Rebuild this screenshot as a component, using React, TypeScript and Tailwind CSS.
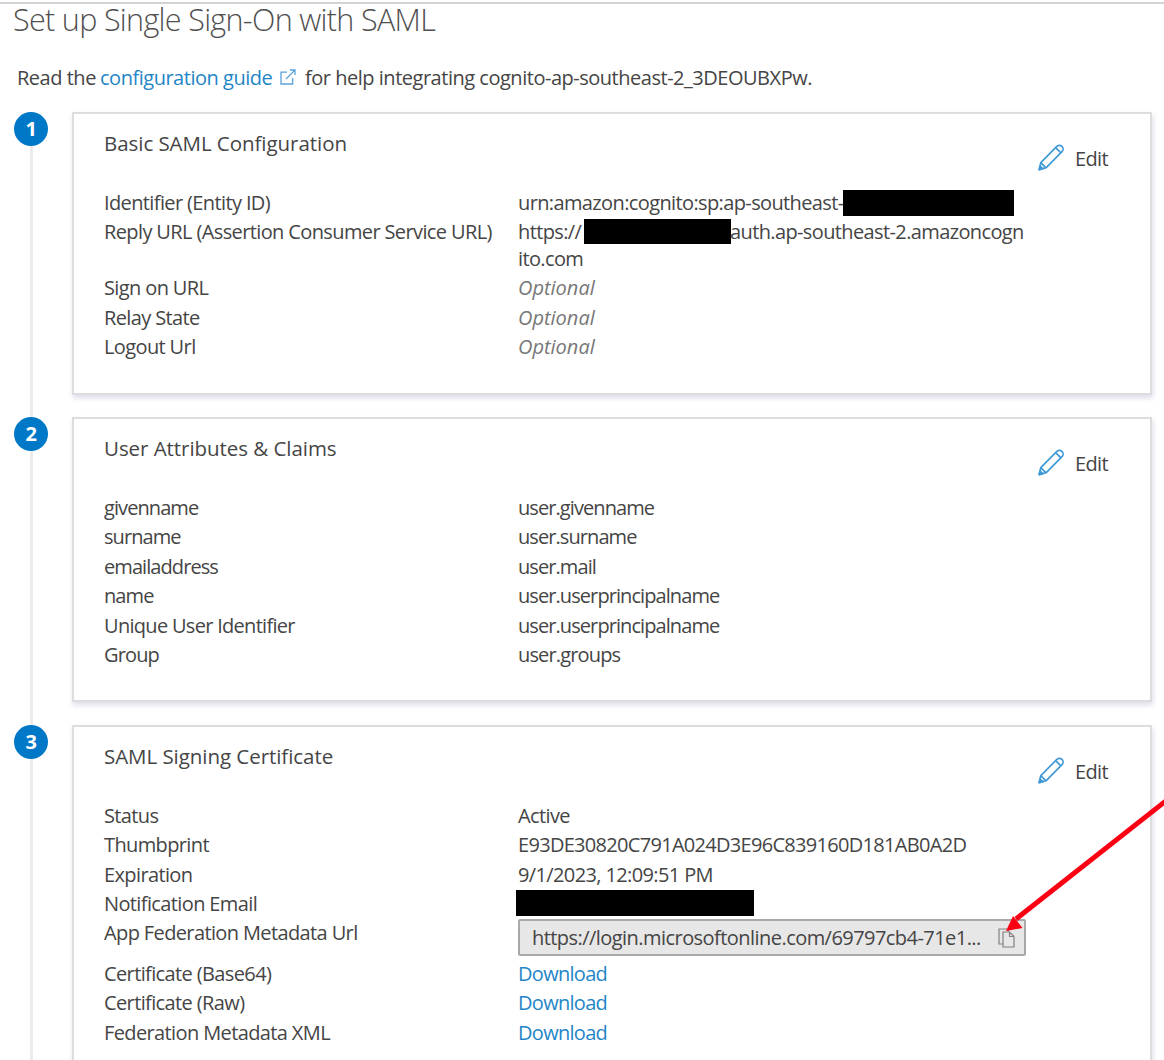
import React from 'react';

interface Row {
  label: string;
  value: React.ReactNode;
  className?: string;
}

interface StepProps {
  number: number;
  title: string;
  rows: Row[];
  last?: boolean;
}

const Optional = () => <span className="italic text-[#777] tracking-[0px]">Optional</span>;

const DownloadLink = () => (
  <a href="#" className="text-[#1f86c7] tracking-[-0.7px]">Download</a>
);

const PencilIcon = () => (
  <svg className="w-[26px] h-[27px]" viewBox="0 0 26 27" fill="none" stroke="#3f9ad6" strokeWidth="1.7" strokeLinejoin="round">
    <path d="M1.2 25.6 L2.8 18.6 L18.6 2.6 C20 1 22.4 0.9 23.9 2.3 C25.5 3.8 25.4 6.2 24 7.7 L8 23.8 Z" />
    <path d="M2.8 18.6 L8 23.8 M17.6 3.7 L22.9 8.8" />
    <path d="M1.2 25.6 L2 22 L4.8 24.7 Z" fill="#3f9ad6" />
  </svg>
);

const ExternalIcon = () => (
  <svg className="w-[16px] h-[16px]" viewBox="0 0 16 16" fill="none" stroke="#5aa3da" strokeWidth="1.3">
    <path d="M7 3.2 H1 V15 H12.6 V9" />
    <path d="M6 10 L14.6 1.4 M10 1 H15 V6" />
  </svg>
);

const CopyIcon = () => (
  <svg className="w-[17px] h-[20px] shrink-0" viewBox="0 0 17 20" fill="none" stroke="#858080" strokeWidth="1.2">
    <path d="M5 16 H1 V1 H9 L11 3.5" />
    <path d="M5 4 H11.5 L16 8.5 V19 H5 Z M11.5 4 V8.5 H16" />
  </svg>
);

const Step: React.FC<StepProps> = ({ number, title, rows, last }) => (
  <section className="flex">
    <div className="w-[72px] shrink-0 pl-[14px]">
      <div className="w-[34px] h-full flex flex-col items-center">
        <div className="w-[34px] h-[34px] shrink-0 rounded-full bg-[#0078c8] text-white font-bold text-[20px] leading-[33px] text-center">
          {number}
        </div>
        <div className="w-[3px] flex-1 bg-[#ebebeb]" />
      </div>
    </div>
    <div className={last ? 'w-[1080px]' : 'w-[1080px] pb-[22.5px]'}>
      <div className="border-2 border-[#dddde0] pl-[30px] pb-[30px] shadow-[1px_3px_5px_rgba(120,120,170,0.25)]">
        <div className="h-[75px] flex justify-between">
          <h2 className="pt-[15px] text-[20.5px] leading-[29px] tracking-[-0.05px]">{title}</h2>
          <button className="flex items-start pt-[30px] pr-[42px] gap-[11px]">
            <PencilIcon />
            <span className="leading-[30px]">Edit</span>
          </button>
        </div>
        {rows.map((row) => (
          <div key={row.label} className={`flex ${row.className ?? 'h-[29.4px]'}`}>
            <div className="w-[414px] shrink-0 leading-[28.6px] whitespace-nowrap">{row.label}</div>
            <div className="leading-[28.6px] whitespace-nowrap">{row.value}</div>
          </div>
        ))}
      </div>
    </div>
  </section>
);

const basicRows: Row[] = [
  {
    label: 'Identifier (Entity ID)',
    value: (
      <div className="flex">
        <span className="w-[325px]">urn:amazon:cognito:sp:ap-southeast-</span>
        <span className="w-[171px] h-[26px] mt-px bg-black" />
      </div>
    ),
  },
  {
    label: 'Reply URL (Assertion Consumer Service URL)',
    className: 'h-[56px]',
    value: (
      <div>
        <div className="flex h-[26.5px]">
          <span className="w-[66px]">https://</span>
          <span className="w-[147px] h-[25px] mt-px bg-black" />
          <span className="-ml-px">auth.ap-southeast-2.amazoncogn</span>
        </div>
        <div>ito.com</div>
      </div>
    ),
  },
  { label: 'Sign on URL', value: <Optional /> },
  { label: 'Relay State', value: <Optional /> },
  { label: 'Logout Url', value: <Optional /> },
];

const claimRowClass = 'h-[29.4px] tracking-[-0.92px]';

const claimRows: Row[] = [
  { label: 'givenname', value: 'user.givenname', className: claimRowClass },
  { label: 'surname', value: 'user.surname', className: claimRowClass },
  { label: 'emailaddress', value: 'user.mail', className: claimRowClass },
  { label: 'name', value: 'user.userprincipalname', className: claimRowClass },
  {
    label: 'Unique User Identifier',
    value: <span className="tracking-[-0.92px]">user.userprincipalname</span>,
    className: 'h-[29.4px] tracking-[-0.7px]',
  },
  { label: 'Group', value: 'user.groups', className: 'h-[29.4px] tracking-[-0.85px]' },
];

const certificateRows: Row[] = [
  { label: 'Status', value: 'Active' },
  { label: 'Thumbprint', value: <span className="tracking-[-0.7px]">E93DE30820C791A024D3E96C839160D181AB0A2D</span> },
  { label: 'Expiration', value: '9/1/2023, 12:09:51 PM' },
  { label: 'Notification Email', value: <div className="w-[238px] h-[26px] -ml-[2px] bg-black" /> },
  {
    label: 'App Federation Metadata Url',
    className: 'h-[40.5px]',
    value: (
      <div className="w-[508px] h-[37px] border-2 border-[#a9a9a9] bg-[#e8e7e7] rounded-[2px] flex items-center pl-[12px]">
        <span className="w-[466px] tracking-[-0.55px]">https://login.microsoftonline.com/69797cb4-71e1...</span>
        <CopyIcon />
      </div>
    ),
  },
  { label: 'Certificate (Base64)', value: <DownloadLink /> },
  { label: 'Certificate (Raw)', value: <DownloadLink /> },
  { label: 'Federation Metadata XML', value: <DownloadLink /> },
];

export default function App() {
  return (
    <main className="relative w-[1164px] h-[1060px] overflow-hidden bg-white pt-[2px] font-['Open_Sans','Noto_Sans',sans-serif] text-[20px] tracking-[-0.62px] text-[#454545]">
      <header className="h-[110px] border-t-2 border-[#d3d3d3]">
        <h1 className="pl-[13px] text-[30.5px] leading-[31px] font-light tracking-[-0.67px] whitespace-nowrap text-[#505050]">
          Set up Single Sign-On with SAML
        </h1>
        <p className="pl-[17px] mt-[27.5px] flex leading-[29px] whitespace-nowrap tracking-[-0.48px]">
          <span className="w-[83px]">Read the</span>
          <a href="#" className="flex w-[205px] items-center justify-between pr-[9px] text-[#1f86c7]">
            configuration guide
            <ExternalIcon />
          </a>
          <span>for help integrating cognito-ap-southeast-2_3DEOUBXPw.</span>
        </p>
      </header>

      <Step number={1} title="Basic SAML Configuration" rows={basicRows} />
      <Step number={2} title="User Attributes & Claims" rows={claimRows} />
      <Step number={3} title="SAML Signing Certificate" rows={certificateRows} last />

      {/* Callout arrow pointing at the copy button */}
      <svg className="absolute left-[1000px] top-[790px] w-[164px] h-[150px]" viewBox="0 0 164 150">
        <path d="M167 10 L16 129" stroke="#fb0012" strokeWidth="5" />
        <path d="M6 141 L13 126 L22.5 138 Z" fill="#fb0012" />
      </svg>
    </main>
  );
}
